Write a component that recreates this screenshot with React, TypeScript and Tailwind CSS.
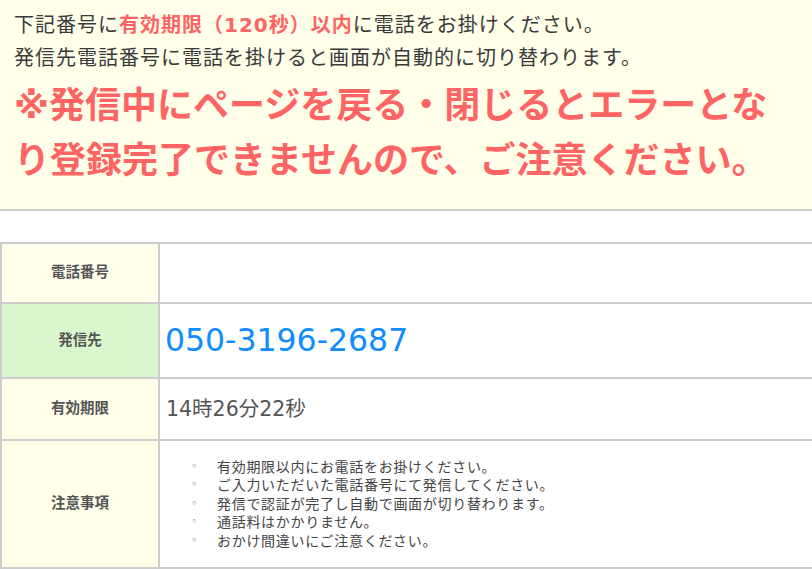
import React from "react";

const jp = { fontFamily: '"DejaVu Sans", "Noto Sans CJK JP", sans-serif' };

export default function App() {
  const notes = [
    "有効期限以内にお電話をお掛けください。",
    "ご入力いただいた電話番号にて発信してください。",
    "発信で認証が完了し自動で画面が切り替わります。",
    "通話料はかかりません。",
    "おかけ間違いにご注意ください。",
  ];
  return (
    <div className="w-[812px] h-[569px] overflow-hidden bg-white" style={jp}>
      <div className="w-[812px] bg-[#ffffea] border-b-2 border-[#cccccc] pl-[14px] pr-[14px] pt-[8.5px] pb-[21.5px]">
        <p className="text-[20px] tracking-[1px] leading-[33px] text-[#3a3a3a]">
          下記番号に
          <span className="font-bold text-[#ff6464]">有効期限（120秒）以内</span>
          に電話をお掛けください。
        </p>
        <p className="text-[20px] tracking-[1px] leading-[33px] text-[#3a3a3a]">
          発信先電話番号に電話を掛けると画面が自動的に切り替わります。
        </p>
        <p className="mt-[3px] text-[36px] leading-[55px] font-bold text-[#ff6464]">
          ※発信中にページを戻る・閉じるとエラーとなり登録完了できませんので、ご注意ください。
        </p>
      </div>

      <div className="mt-[31px] w-[830px] border-t-2 border-l-2 border-[#cccccc]">
        <div className="flex h-[60px] border-b-2 border-[#cccccc]">
          <div className="w-[158px] shrink-0 border-r-2 border-[#cccccc] bg-[#ffffea] flex items-center justify-center text-[14.5px] font-bold text-[#555555]">
            電話番号
          </div>
          <div className="flex-1" />
        </div>
        <div className="flex h-[75px] border-b-2 border-[#cccccc]">
          <div className="w-[158px] shrink-0 border-r-2 border-[#cccccc] bg-[#d9f6cc] flex items-center justify-center text-[14.5px] font-bold text-[#555555]">
            発信先
          </div>
          <div className="flex-1 flex items-center pl-[5px] text-[31.5px] text-[#0f8cff]">
            050-3196-2687
          </div>
        </div>
        <div className="flex h-[62px] border-b-2 border-[#cccccc]">
          <div className="w-[158px] shrink-0 border-r-2 border-[#cccccc] bg-[#ffffea] flex items-center justify-center text-[14.5px] font-bold text-[#555555]">
            有効期限
          </div>
          <div className="flex-1 flex items-center pl-[6px] text-[20.5px] text-[#555555]">
            14時26分22秒
          </div>
        </div>
        <div className="flex h-[128px] border-b-2 border-[#cccccc]">
          <div className="w-[158px] shrink-0 border-r-2 border-[#cccccc] bg-[#ffffea] flex items-center justify-center text-[14.5px] font-bold text-[#555555]">
            注意事項
          </div>
          <div className="flex-1 flex items-center">
            <ul className="pl-[31px]">
              {notes.map((n) => (
                <li key={n} className="flex text-[14px] tracking-[0.7px] leading-[18.5px] text-[#444444]">
                  <span className="w-[26px] text-[11px] text-[#666666]">◦</span>
                  <span>{n}</span>
                </li>
              ))}
            </ul>
          </div>
        </div>
      </div>
    </div>
  );
}
